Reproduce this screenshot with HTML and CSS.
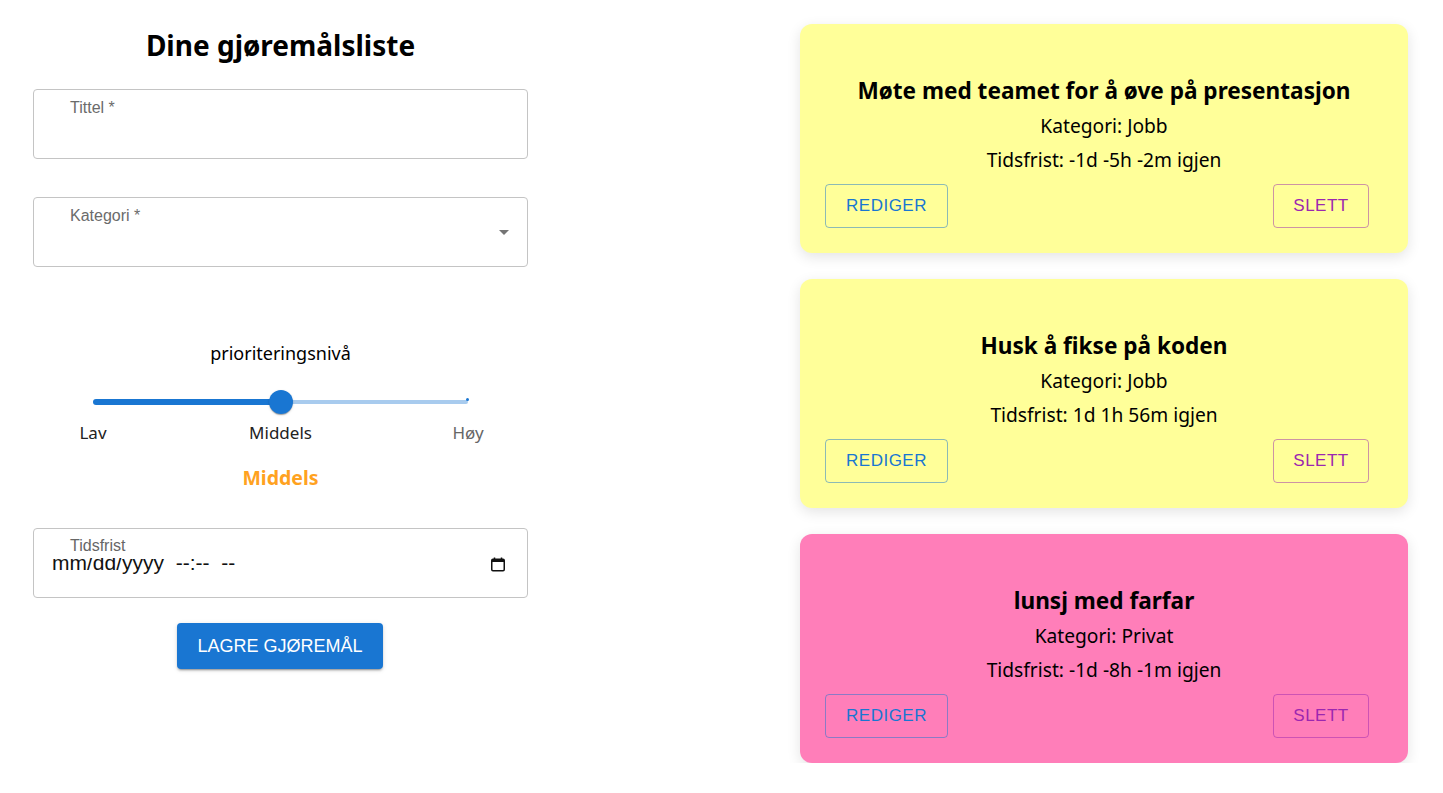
FILE: index.html
```html
<!DOCTYPE html>
<html lang="no">
<head>
<meta charset="utf-8">
<title>Dine gjøremålsliste</title>
<link rel="stylesheet" href="styles.css">
</head>
<body>
<main class="page">
  <section class="form-col">
    <h1 class="form-title">Dine gjøremålsliste</h1>

    <div class="field">
      <span class="field-label">Tittel *</span>
    </div>

    <div class="field field-select">
      <span class="field-label">Kategori *</span>
      <svg class="select-arrow" viewBox="0 0 24 24" width="24" height="24"><path d="M7 10l5 5 5-5z"/></svg>
    </div>

    <p class="priority-title">prioriteringsnivå</p>

    <div class="slider">
      <div class="slider-rail">
        <div class="slider-track" style="width:50%"></div>
        <div class="slider-rest"></div>
        <span class="slider-end"></span>
      </div>
      <span class="slider-thumb" style="left:50%"></span>
    </div>
    <div class="marks">
      <span class="mark">Lav</span>
      <span class="mark">Middels</span>
      <span class="mark mark-muted">Høy</span>
    </div>

    <p class="priority-value">Middels</p>

    <div class="field field-date">
      <span class="date-clip"><span class="date-text">mm/dd/yyyy&nbsp; --:--&nbsp; --</span></span>
      <svg class="cal-icon" viewBox="0 0 16 16" width="16" height="16">
        <rect x="1.75" y="3.25" width="12.5" height="11.5" rx="1.2" fill="none" stroke="#111" stroke-width="1.5"/>
        <rect x="2" y="3.5" width="12" height="2.5" fill="#111"/>
        <path d="M4.5 1.5v2.5M11.5 1.5v2.5" stroke="#111" stroke-width="1.5"/>
      </svg>
      <span class="float-label">Tidsfrist</span>
    </div>

    <div class="actions">
      <button class="save-btn" type="button">LAGRE GJØREMÅL</button>
    </div>
  </section>

  <section class="cards">
    <article class="card card-yellow">
      <h2 class="card-title">Møte med teamet for å øve på presentasjon</h2>
      <p class="card-line">Kategori: Jobb</p>
      <p class="card-line">Tidsfrist: -1d -5h -2m igjen</p>
      <div class="card-actions">
        <button class="btn-outline btn-edit" type="button">REDIGER</button>
        <button class="btn-outline btn-delete" type="button">SLETT</button>
      </div>
    </article>

    <article class="card card-yellow">
      <h2 class="card-title">Husk å fikse på koden</h2>
      <p class="card-line">Kategori: Jobb</p>
      <p class="card-line">Tidsfrist: 1d 1h 56m igjen</p>
      <div class="card-actions">
        <button class="btn-outline btn-edit" type="button">REDIGER</button>
        <button class="btn-outline btn-delete" type="button">SLETT</button>
      </div>
    </article>

    <article class="card card-pink">
      <h2 class="card-title">lunsj med farfar</h2>
      <p class="card-line">Kategori: Privat</p>
      <p class="card-line">Tidsfrist: -1d -8h -1m igjen</p>
      <div class="card-actions">
        <button class="btn-outline btn-edit" type="button">REDIGER</button>
        <button class="btn-outline btn-delete" type="button">SLETT</button>
      </div>
    </article>
  </section>
</main>
</body>
</html>
```

FILE: styles.css
```css
* { box-sizing: border-box; }

html, body {
  margin: 0;
  padding: 0;
  background: #fff;
  color: #000;
  font-family: "Noto Sans", "Open Sans", sans-serif;
}

.page {
  display: flex;
  align-items: flex-start;
}

/* ---------- left form column ---------- */
.form-col {
  width: 561px;
  padding: 0 33px;
  display: flex;
  flex-direction: column;
}

.form-title {
  margin: 27px 0 0;
  font-size: 28px;
  line-height: 36px;
  font-weight: 700;
  text-align: center;
}

.field {
  position: relative;
  height: 70px;
  border: 1px solid #c4c4c4;
  border-radius: 4px;
  padding: 9px 0 0 36px;
  margin-top: 26px;
  font-family: "Liberation Sans", Arial, sans-serif;
}

.field-select {
  margin-top: 38px;
  display: flex;
  align-items: flex-start;
}

.field-label {
  display: block;
  flex: 1;
  font-size: 16px;
  line-height: 18px;
  color: #6b6b6b;
}

.select-arrow {
  align-self: center;
  margin: -9px 11px 0 0;
  fill: #757575;
}

.priority-title {
  margin: 74px 0 0;
  font-size: 18px;
  line-height: 24px;
  text-align: center;
}

.slider {
  position: relative;
  height: 24px;
  margin: 25px 60px 0;
  display: flex;
  align-items: center;
}

.slider-rail {
  position: relative;
  flex: 1;
  display: flex;
  align-items: center;
}

.slider-track {
  height: 6px;
  background: #1976d2;
  border-radius: 3px 0 0 3px;
}

.slider-rest {
  flex: 1;
  height: 4px;
  background: #a8cbee;
  border-radius: 0 2px 2px 0;
}

.slider-end {
  position: absolute;
  right: -1px;
  top: -1px;
  width: 3px;
  height: 3px;
  border-radius: 50%;
  background: #1976d2;
}

.slider-thumb {
  position: absolute;
  top: 0;
  width: 24px;
  height: 24px;
  margin-left: -12px;
  border-radius: 50%;
  background: #1976d2;
  box-shadow: 0 2px 1px -1px rgba(0,0,0,0.2), 0 1px 1px rgba(0,0,0,0.14), 0 1px 3px rgba(0,0,0,0.12);
}

.marks {
  display: flex;
  justify-content: space-between;
  margin: 8px 60px 0;
}

.mark {
  width: 0;
  display: flex;
  justify-content: center;
  white-space: nowrap;
  font-size: 17px;
  line-height: 22px;
  color: #222;
}

.mark-muted { color: #666; }

.priority-value {
  margin: 22px 0 0;
  font-size: 19.5px;
  line-height: 24px;
  font-weight: 700;
  color: #ffa21f;
  text-align: center;
}

.field-date {
  margin-top: 38px;
  padding: 0 21px 0 18px;
  display: flex;
  align-items: center;
}

.date-clip {
  flex: 1;
  height: 18px;
  margin-top: 8px;
  overflow: hidden;
  display: block;
}

.date-text {
  display: block;
  margin-top: -8px;
  font-size: 21px;
  line-height: 26px;
  color: #111;
  white-space: nowrap;
}

.cal-icon { flex: none; margin-top: 1px; }

.float-label {
  position: absolute;
  left: 36px;
  top: 8px;
  font-size: 16px;
  line-height: 18px;
  color: #666;
}

.actions {
  display: flex;
  justify-content: center;
  margin-top: 25px;
}

.save-btn {
  width: 206px;
  height: 46px;
  margin-left: -1px;
  border: 0;
  border-radius: 4px;
  background: #1976d2;
  color: #fff;
  font-family: "Liberation Sans", Arial, sans-serif;
  font-size: 18px;
  box-shadow: 0 3px 1px -2px rgba(0,0,0,0.2), 0 2px 2px rgba(0,0,0,0.14), 0 1px 5px rgba(0,0,0,0.12);
}

/* ---------- right card column ---------- */
.cards {
  margin: 24px 0 0 239px;
  width: 608px;
  display: flex;
  flex-direction: column;
  gap: 26px;
}

.card {
  height: 229px;
  border-radius: 12px;
  padding: 52px 39px 25px 25px;
  display: flex;
  flex-direction: column;
  text-align: center;
  box-shadow: 0 4px 14px rgba(0,0,0,0.11);
}

.card-yellow { background: #ffff99; }
.card-pink { background: #ff7eb9; }

.card-title {
  margin: 0 0 8px 14px;
  font-size: 22.6px;
  line-height: 30px;
  font-weight: 700;
}

.card-line {
  margin: 0 0 10px 14px;
  font-size: 19.2px;
  line-height: 24px;
}

.card-line + .card-line { margin-bottom: 12px; }

.card-actions {
  display: flex;
  justify-content: space-between;
}

.btn-outline {
  height: 44px;
  padding: 0;
  background: transparent;
  border-radius: 4px;
  font-family: "Liberation Sans", Arial, sans-serif;
  font-size: 17px;
  letter-spacing: 0.5px;
}

.btn-edit {
  width: 123px;
  color: #1976d2;
  border: 1px solid rgba(25,118,210,0.5);
}

.btn-delete {
  width: 96px;
  color: #9c27b0;
  border: 1px solid rgba(156,39,176,0.5);
}
```
